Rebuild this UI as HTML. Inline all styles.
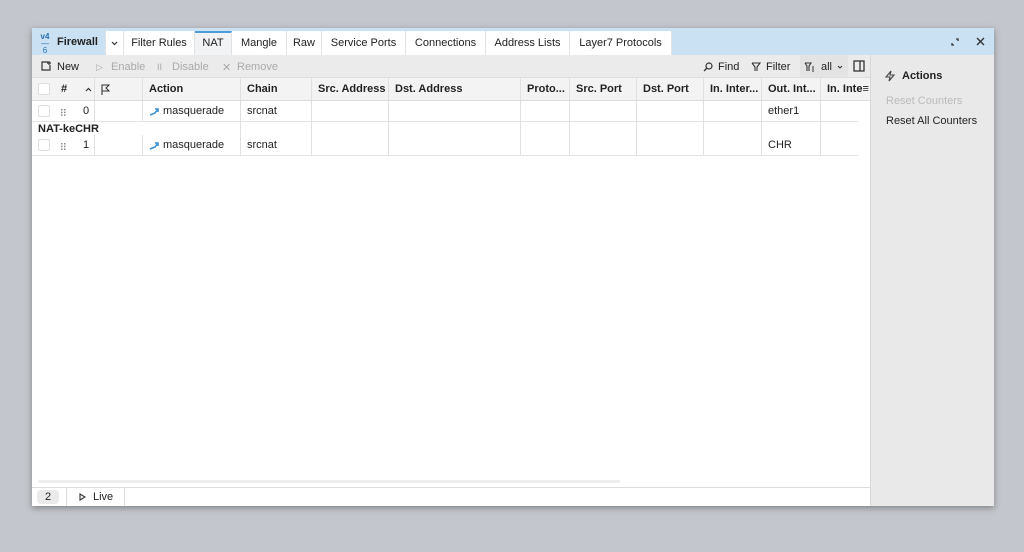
<!DOCTYPE html>
<html><head><meta charset="utf-8"><style>
*{box-sizing:border-box;margin:0;padding:0}
body{width:1024px;height:552px;background:#c3c6cc;font-family:"Liberation Sans",sans-serif;font-size:11px;color:#222;position:relative;overflow:hidden}
.win{position:absolute;left:32px;top:28px;width:962px;height:478px;background:#fff;box-shadow:0 2px 6px rgba(0,0,0,.35)}
.title{position:absolute;left:0;top:0;width:962px;height:27px;background:#c9e1f3}
.tab{position:absolute;top:3px;height:24px;background:#fff;border-right:1px solid #e2e2e2;line-height:24px;text-align:center;font-size:11px;color:#222}
.tab.act{background:#f2f3f4;border-top:2px solid #4d9ed8;line-height:21px}
.tb{position:absolute;left:0;top:27px;width:838px;height:23px;background:#ebebeb;border-bottom:1px solid #ddd}
.tb span{position:absolute;top:6px;font-size:11px}
.tb svg{position:absolute}
.side{position:absolute;left:838px;top:27px;width:124px;height:451px;background:#e9e9ea;border-left:1px solid #d8d8d8}
.hdr{position:absolute;left:0;top:50px;width:838px;height:23px;background:#f3f3f3;border-bottom:1px solid #ddd}
.c{position:absolute;top:0;height:100%;border-right:1px solid #e0e0e0;padding-left:6px;line-height:23px;white-space:nowrap;overflow:hidden}
.hdr .c{font-weight:bold}
.row{position:absolute;left:0;width:826px;border-bottom:1px solid #e4e4e4}
.cb{position:absolute;left:6px;width:12px;height:12px;border:1px solid #ddd;border-radius:2px;background:#fff}
.bot{position:absolute;left:0;top:459px;width:838px;height:19px;border-top:1px solid #ddd;background:#fff}
.dots{position:absolute;left:6px;top:8px}
</style></head><body>
<div class="win">
 <div class="title">
  <div style="position:absolute;left:7px;top:5px;font-size:8px;color:#2a6fb0;line-height:7px;text-align:center;width:12px"><b>v4</b><br>—<br>6</div>
  <div style="position:absolute;left:25px;top:8px;font-weight:bold;font-size:11px">Firewall</div>
  <div class="tab" style="left:73px;width:19px;border-left:1px solid #e2e2e2"><svg width="7" height="5" viewBox="0 0 7 5" style="margin-top:10px"><path d="M1 1l2.5 2.5L6 1" stroke="#333" fill="none" stroke-width="1.2"/></svg></div>
  <div class="tab" style="left:92px;width:71px">Filter Rules</div>
  <div class="tab act" style="left:163px;width:37px;top:3px">NAT</div>
  <div class="tab" style="left:200px;width:55px">Mangle</div>
  <div class="tab" style="left:255px;width:35px">Raw</div>
  <div class="tab" style="left:290px;width:84px">Service Ports</div>
  <div class="tab" style="left:374px;width:80px">Connections</div>
  <div class="tab" style="left:454px;width:84px">Address Lists</div>
  <div class="tab" style="left:538px;width:102px">Layer7 Protocols</div>
  <svg style="position:absolute;left:919px;top:10px" width="8" height="8" viewBox="0 0 8 8"><path d="M1 5v2h2M5 1h2v2" stroke="#333" fill="none" stroke-width="1.3"/></svg>
  <svg style="position:absolute;left:944px;top:9px" width="9" height="9" viewBox="0 0 9 9"><path d="M1 1l7 7M8 1l-7 7" stroke="#333" stroke-width="1.4"/></svg>
 </div>
 <div class="tb">
  <svg style="left:9px;top:6px" width="11" height="10" viewBox="0 0 11 10"><path d="M7 1H1v8h8V4M8 0v4M6 2h4" stroke="#333" fill="none" stroke-width="1.2"/></svg>
  <span style="left:25px">New</span>
  <span style="left:64px;color:#aaa;font-size:9px;top:7px">▷</span><span style="left:79px;color:#aaa">Enable</span>
  <span style="left:125px;color:#aaa;font-size:9px;top:7px">II</span><span style="left:140px;color:#aaa">Disable</span>
  <span style="left:190px;color:#aaa">✕</span><span style="left:205px;color:#aaa">Remove</span>
  <svg style="left:671px;top:7px" width="10" height="10" viewBox="0 0 10 10"><circle cx="6" cy="4" r="3" stroke="#333" fill="none" stroke-width="1.2"/><path d="M4 6L1 9" stroke="#333" stroke-width="1.3"/></svg>
  <span style="left:686px">Find</span>
  <svg style="left:719px;top:7px" width="10" height="10" viewBox="0 0 10 10"><path d="M1 1h8L6 5v4M4 9V5L1 1" stroke="#333" fill="none" stroke-width="1.1"/></svg>
  <span style="left:734px">Filter</span>
  <span style="left:768px;top:0;height:22px;width:48px;background:#e3e3e3"></span>
  <svg style="left:772px;top:7px" width="11" height="10" viewBox="0 0 11 10"><path d="M1 1h6L5 4v5M3 9V4L1 1M8 5h2M8 7h2M8 9h2" stroke="#333" fill="none" stroke-width="1.1"/></svg>
  <span style="left:789px">all</span>
  <svg style="left:805px;top:10px" width="6" height="4" viewBox="0 0 6 4"><path d="M1 1l2 2 2-2" stroke="#333" fill="none"/></svg>
  <svg style="left:821px;top:5px" width="12" height="12" viewBox="0 0 12 12"><rect x="1" y="1" width="10" height="10" stroke="#333" fill="none" stroke-width="1.3"/><path d="M7 1v10" stroke="#333" stroke-width="1.3"/></svg>
 </div>
 <div class="hdr">
  <div class="cb" style="top:5px"></div>
  <div class="c" style="left:23px;width:40px">#<svg style="position:absolute;left:30px;top:9px" width="7" height="5" viewBox="0 0 7 5"><path d="M1 4l2.5-2.5L6 4" stroke="#333" fill="none" stroke-width="1.2"/></svg></div>
  <div class="c" style="left:63px;width:48px"><svg style="position:absolute;left:6px;top:6px" width="9" height="11" viewBox="0 0 9 11"><path d="M1 11V1h7L5 4l3 3H1" stroke="#333" fill="none" stroke-width="1.1"/></svg></div>
  <div class="c" style="left:111px;width:98px">Action</div>
  <div class="c" style="left:209px;width:71px">Chain</div>
  <div class="c" style="left:280px;width:77px">Src. Address</div>
  <div class="c" style="left:357px;width:132px">Dst. Address</div>
  <div class="c" style="left:489px;width:49px">Proto...</div>
  <div class="c" style="left:538px;width:67px">Src. Port</div>
  <div class="c" style="left:605px;width:67px">Dst. Port</div>
  <div class="c" style="left:672px;width:58px">In. Inter...</div>
  <div class="c" style="left:730px;width:59px">Out. Int...</div>
  <div class="c" style="left:789px;width:49px;border:0">In. Inte≡</div>
 </div>
 <div class="row" style="top:73px;height:21px">
  <div class="cb" style="top:4px"></div>
  <div class="c" style="left:23px;width:40px;line-height:21px"><svg class="dots" width="5" height="7" viewBox="0 0 5 7"><g fill="#888"><rect x="0" y="0" width="1.5" height="1.5"/><rect x="3" y="0" width="1.5" height="1.5"/><rect x="0" y="2.7" width="1.5" height="1.5"/><rect x="3" y="2.7" width="1.5" height="1.5"/><rect x="0" y="5.4" width="1.5" height="1.5"/><rect x="3" y="5.4" width="1.5" height="1.5"/></g></svg><span style="position:absolute;left:28px">0</span></div>
  <div class="c" style="left:63px;width:48px"></div>
  <div class="c" style="left:111px;width:98px;line-height:21px;padding-left:20px"><svg style="position:absolute;left:6px;top:7px" width="10" height="8" viewBox="0 0 10 8"><path d="M1 7l5-2 3-4M6 1h3v3" stroke="#3a8fd0" fill="none" stroke-width="1.5"/></svg>masquerade</div>
  <div class="c" style="left:209px;width:71px;line-height:21px">srcnat</div>
  <div class="c" style="left:280px;width:77px"></div><div class="c" style="left:357px;width:132px"></div>
  <div class="c" style="left:489px;width:49px"></div><div class="c" style="left:538px;width:67px"></div>
  <div class="c" style="left:605px;width:67px"></div><div class="c" style="left:672px;width:58px"></div>
  <div class="c" style="left:730px;width:59px;line-height:21px">ether1</div>
 </div>
 <div class="row" style="top:94px;height:34px">
  <div style="position:absolute;left:6px;top:1px;font-weight:bold">NAT-keCHR</div>
  <div class="cb" style="top:17px"></div>
  <div class="c" style="left:23px;width:40px;top:13px;height:21px;line-height:21px"><svg class="dots" width="5" height="7" viewBox="0 0 5 7"><g fill="#888"><rect x="0" y="0" width="1.5" height="1.5"/><rect x="3" y="0" width="1.5" height="1.5"/><rect x="0" y="2.7" width="1.5" height="1.5"/><rect x="3" y="2.7" width="1.5" height="1.5"/><rect x="0" y="5.4" width="1.5" height="1.5"/><rect x="3" y="5.4" width="1.5" height="1.5"/></g></svg><span style="position:absolute;left:28px">1</span></div>
  <div class="c" style="left:63px;width:48px;top:13px;height:21px"></div>
  <div class="c" style="left:111px;width:98px;height:34px;line-height:21px;padding-top:13px;padding-left:20px"><svg style="position:absolute;left:6px;top:20px" width="10" height="8" viewBox="0 0 10 8"><path d="M1 7l5-2 3-4M6 1h3v3" stroke="#3a8fd0" fill="none" stroke-width="1.5"/></svg>masquerade</div>
  <div class="c" style="left:209px;width:71px;height:34px;line-height:21px;padding-top:13px">srcnat</div>
  <div class="c" style="left:280px;width:77px"></div><div class="c" style="left:357px;width:132px"></div>
  <div class="c" style="left:489px;width:49px"></div><div class="c" style="left:538px;width:67px"></div>
  <div class="c" style="left:605px;width:67px"></div><div class="c" style="left:672px;width:58px"></div>
  <div class="c" style="left:730px;width:59px;line-height:21px;padding-top:13px">CHR</div>
 </div>
 <div style="position:absolute;left:6px;top:452px;width:582px;height:3px;background:#eee;border-radius:2px"></div>
 <div class="bot">
  <div style="position:absolute;left:5px;top:2px;width:22px;height:14px;background:#eaeaea;border-radius:4px;text-align:center;line-height:14px">2</div>
  <div style="position:absolute;left:34px;top:0;width:59px;height:18px;border-left:1px solid #ddd;border-right:1px solid #ddd;line-height:18px;padding-left:26px"><svg style="position:absolute;left:12px;top:5px" width="7" height="8" viewBox="0 0 7 8"><path d="M1 1l5 3-5 3z" stroke="#333" fill="none" stroke-width="1.1"/></svg>Live</div>
 </div>
 <div class="side">
  <svg style="position:absolute;left:13px;top:15px" width="12" height="12" viewBox="0 0 12 12"><path d="M7 1L2 7h4l-1 4 5-6H6z" stroke="#444" fill="none" stroke-width="1.1"/></svg>
  <div style="position:absolute;left:31px;top:15px;font-weight:bold;font-size:11px">Actions</div>
  <div style="position:absolute;left:15px;top:40px;color:#bbb">Reset Counters</div>
  <div style="position:absolute;left:15px;top:60px">Reset All Counters</div>
 </div>
</div>
</body></html>
